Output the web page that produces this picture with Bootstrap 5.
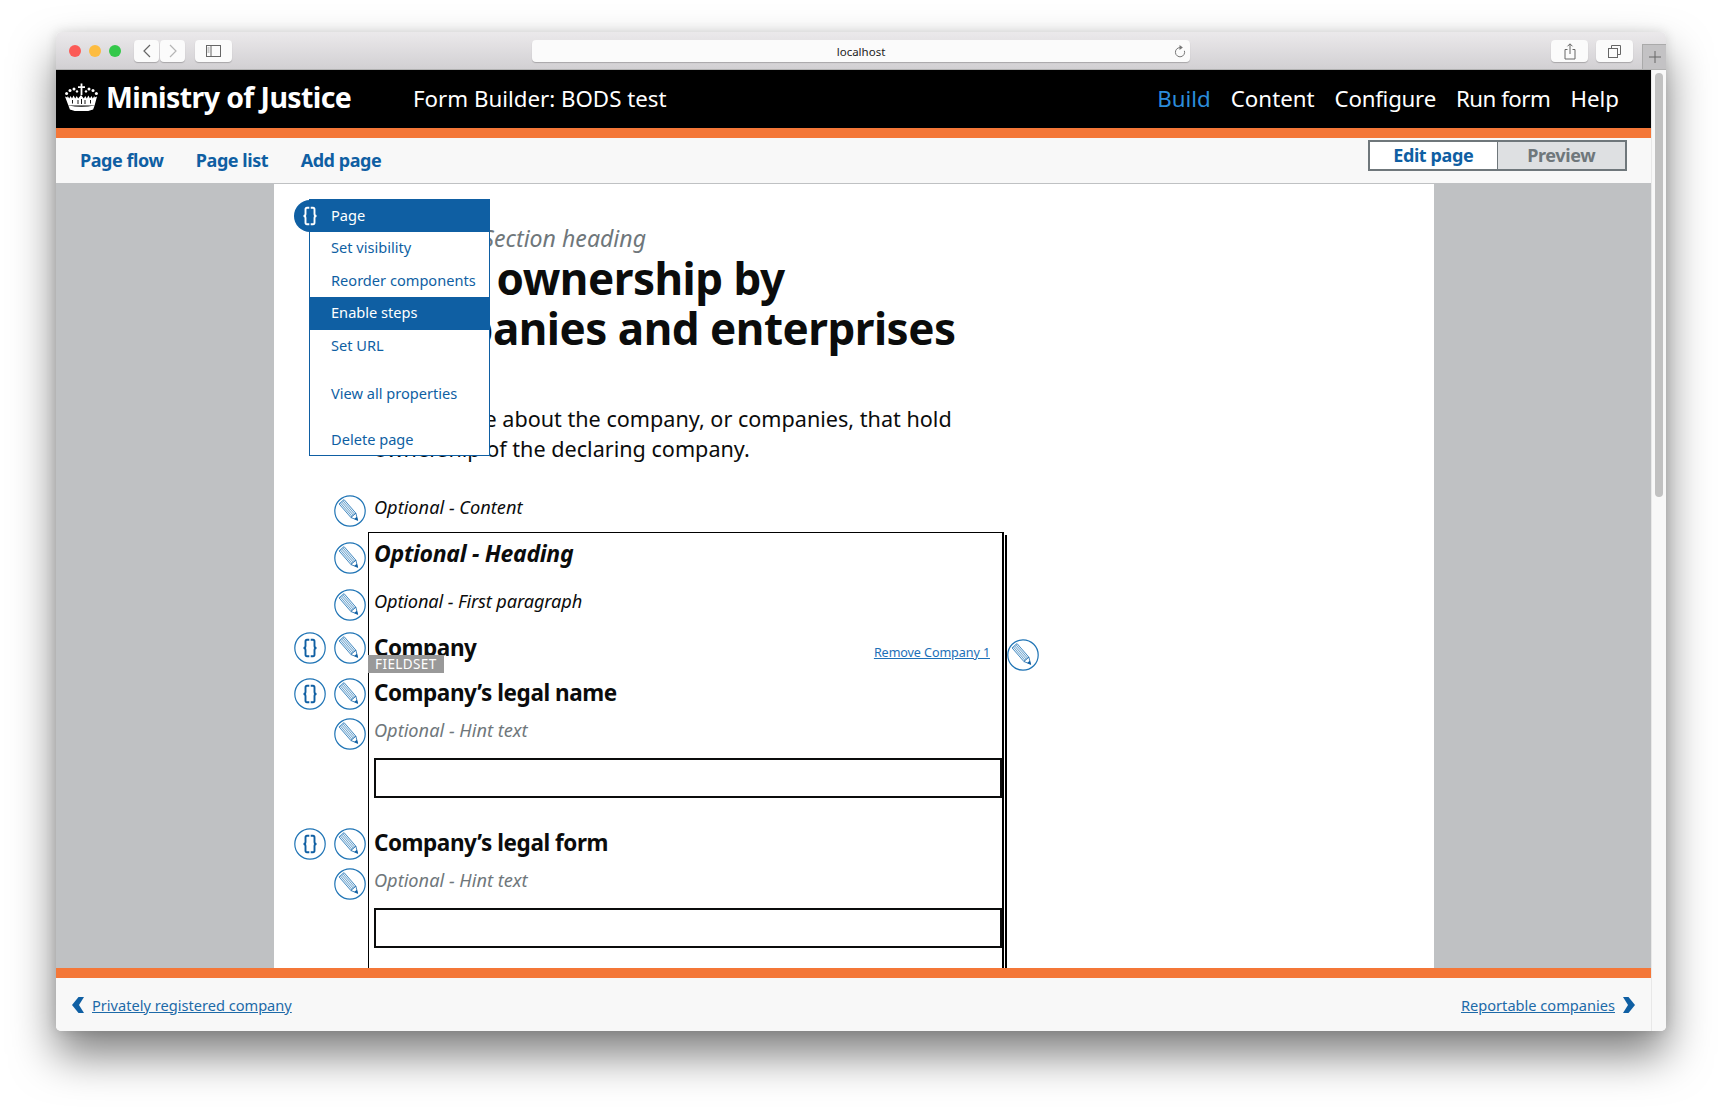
<!DOCTYPE html>
<html lang="en">

<head>
  <meta charset="UTF-8">
  <meta name="viewport" content="width=device-width, initial-scale=1.0">
  <title>Form Builder: BODS test</title>
  <link href="https://cdn.jsdelivr.net/npm/bootstrap@5.3.0/dist/css/bootstrap.min.css" rel="stylesheet">
  <style>
    html, body {
      height: 100%;
      background: #fff;
      overflow: hidden;
    }

    body {
      padding: 32px 56px 0;
      font-family: "Noto Sans", "Liberation Sans", sans-serif;
      color: #0b0c0c;
    }

    /* browser window */
    .mac-window {
      width: 1610px;
      height: 999px;
      border-radius: 5px;
      overflow: hidden;
      box-shadow: 0 24px 44px rgba(0, 0, 0, .5), 0 0 12px rgba(0, 0, 0, .12);
    }

    .mac-bar {
      height: 38px;
      padding-top: 8px;
      background: linear-gradient(#ebe9eb, #d2d0d3);
      border-bottom: 1px solid #b1b1b1;
    }

    .mac-dot {
      width: 12px;
      height: 12px;
      border-radius: 50%;
      margin-top: 5px;
      margin-left: 8px;
    }

    .dot-red { margin-left: 13px; background: #fc5b57; }
    .dot-amber { background: #fdbc40; }
    .dot-green { background: #34c84a; }

    .mac-btn {
      height: 22px;
      width: 37px;
      margin-left: 8px;
      background: #fbfbfb;
      border-radius: 4px;
      box-shadow: 0 1px 1px rgba(0, 0, 0, .22);
    }

    .mac-btn.btn-back { width: 25px; margin-left: 13px; }
    .mac-btn.btn-next { width: 25px; margin-left: 1px; }
    .mac-btn.btn-side { margin-left: 10px; }
    .mac-btn.btn-share { margin-left: 361px; }

    .mac-btn.mac-url {
      width: 658px;
      margin-left: 300px;
      font-size: 11.5px;
      padding-top: 1px;
      color: #222;
      position: relative;
    }

    .mac-plus {
      width: 24px;
      height: 25px;
      margin: 4px 0 0 9px;
      background: #c3c2c4;
      border-left: 1px solid #aaa;
      border-top: 1px solid #aaa;
    }

    /* app header */
    .app-head {
      height: 58px;
      background: #000;
      color: #fff;
    }

    .moj-crown {
      margin-top: -4px;
    }

    .moj-name {
      font-size: 28.5px;
      font-weight: 700;
      letter-spacing: -.6px;
      line-height: 1;
      margin: -4px 0 0 7px;
      width: 307px;
    }

    .form-name,
    .head-link {
      font-size: 22.3px;
      color: #fff;
      text-decoration: none;
    }

    .head-nav {
      gap: 20px;
      margin-right: 32px;
    }

    .head-link.on {
      color: #2b8cdb;
    }

    .head-link.tight-a { letter-spacing: -.25px; }
    .head-link.tight-b { letter-spacing: -.5px; }

    .orange-bar {
      height: 10px;
      background: #f47738;
    }

    .sub-nav {
      height: 46px;
      background: #f8f8f8;
      border-bottom: 1px solid #bfc1c3;
      padding: 0 24px;
      gap: 32.5px;
    }

    .sub-link {
      font-size: 18px;
      font-weight: 700;
      color: #0f5fa3;
      text-decoration: none;
      letter-spacing: -.45px;
    }

    .view-toggle {
      height: 31px;
      margin-top: -11px;
      border: 2px solid #6f777b;
    }

    .view-toggle a {
      width: 127.5px;
      font-size: 18px;
      font-weight: 700;
      letter-spacing: -.4px;
      text-decoration: none;
    }

    .view-edit {
      background: #fff;
      color: #0f5fa3;
      border-right: 1px solid #6f777b;
    }

    .view-preview {
      background: #dee0e2;
      color: #6f777b;
    }

    /* editor area */
    .editor-bg {
      height: 784px;
      background: #bfc1c3;
      overflow: hidden;
    }

    .editor-page {
      width: 1160px;
      height: 100%;
      margin-left: 218px;
      background: #fff;
      padding: 39px 0 0 100px;
    }

    .edit-row {
      position: relative;
    }

    .edit-handle {
      position: absolute;
      left: -40px;
      width: 32px;
      height: 32px;
      display: block;
    }

    .edit-handle.brace {
      left: -80px;
    }

    .edit-handle.far {
      left: auto;
      right: -37px;
      top: 6px;
    }

    .t-0 { top: 0; }
    .t-1 { top: 1px; }
    .t-2 { top: 2px; }
    .t-4 { top: 4px; }
    .t-n1 { top: -1px; }

    .sec-heading {
      font-size: 23.1px;
      line-height: 30px;
      font-style: italic;
      color: #6f777b;
    }

    .page-title {
      font-size: 44px;
      line-height: 50px;
      font-weight: 700;
      margin: 0 0 51px;
      letter-spacing: -.5px;
    }

    .title-tight {
      letter-spacing: -1.3px;
    }

    .lede-text {
      font-size: 21.6px;
      line-height: 30px;
      margin: 0 0 29px;
    }

    .opt-text {
      font-size: 18.2px;
      line-height: 28px;
      font-style: italic;
    }

    .opt-text.para-tight {
      letter-spacing: -.13px;
    }

    .group-box {
      width: 636px;
      height: 500px;
      margin-top: 11px;
      margin-left: -6px;
      padding: 5px 0 0 5px;
      border: 1px solid #000;
      border-right-width: 2px;
      border-bottom: 0;
      position: relative;
    }

    .group-box::after {
      content: "";
      position: absolute;
      top: 2px;
      right: -5px;
      bottom: 0;
      width: 2px;
      background: #000;
    }

    .opt-heading {
      font-size: 23px;
      line-height: 30px;
      font-weight: 700;
      font-style: italic;
      letter-spacing: -.3px;
    }

    .field-title {
      font-size: 22.5px;
      line-height: 30px;
      font-weight: 700;
      letter-spacing: -.45px;
      height: 30px;
    }

    .hint-text {
      font-size: 18.2px;
      line-height: 26px;
      font-style: italic;
      color: #6f777b;
    }

    .field-input {
      display: block;
      width: 628px;
      height: 40px;
      border: 2px solid #0b0c0c;
      border-radius: 0;
      background: #fff;
    }

    .fieldset-tag {
      position: absolute;
      left: -6px;
      top: 22px;
      width: 76px;
      height: 18px;
      background: #999;
      color: #fff;
      font-size: 13.5px;
      font-weight: 400;
      line-height: 18px;
      padding-left: 7px;
      letter-spacing: .4px;
    }

    .remove-link {
      font-size: 12.6px;
      font-weight: 400;
      color: #1d70b8;
      margin: 5px 12px 0 0;
      line-height: 30px;
      letter-spacing: -.1px;
    }

    .mt-9 { margin-top: 9px; }
    .mt-15 { margin-top: 15px; }
    .mt-18 { margin-top: 18px; }
    .mt-19 { margin-top: 19px; }
    .mt-30 { margin-top: 30px; }

    /* component menu, lies over the page */
    .comp-menu {
      position: absolute;
      left: 253px;
      top: 15px;
      width: 181px;
      height: 257px;
      background: #fff;
      border: 1px solid #0f5fa3;
      padding: 0;
      margin: 0;
      list-style: none;
      font-size: 14.6px;
    }

    .comp-menu a {
      display: block;
      height: 33px;
      line-height: 31px;
      padding-left: 21px;
      color: #0f5fa3;
      text-decoration: none;
      white-space: nowrap;
    }

    .comp-menu a.on {
      background: #0f5fa3;
      color: #fff;
    }

    .comp-menu a.row-32 { height: 32px; }
    .comp-menu a.row-low { line-height: 33px; }
    .comp-menu a.gap-a { margin-top: 15px; }
    .comp-menu a.gap-b { margin-top: 13px; }

    .page-pill {
      position: absolute;
      left: 238px;
      top: 16px;
      width: 32px;
      height: 32px;
      border-radius: 16px 0 0 16px;
      background: #0f5fa3;
      color: #fff;
    }

    .pill-braces {
      display: block;
      width: 32px;
      height: 32px;
    }

    /* footer */
    .app-foot {
      height: 53px;
      background: #f8f8f8;
      padding: 2px 16px 0;
      font-size: 14.6px;
    }

    .app-foot a {
      color: #1d6aa8;
    }

    /* fake scrollbar */
    .scroll-track {
      width: 15px;
      background: #f8f8f8;
      border-left: 1px solid #e8e8e8;
      padding: 3px 3px 0;
    }

    .scroll-thumb {
      height: 424px;
      background: #c1c1c1;
      border-radius: 4px;
    }
  </style>
</head>

<body>
  <svg width="0" height="0" class="position-absolute">
    <symbol id="pencil" viewBox="0 0 32 32">
      <circle cx="16" cy="16" r="15.2" fill="#fff" stroke="#1f74b5" stroke-width="1.2"/>
      <g transform="rotate(49 16 16)">
        <rect x="3.5" y="13" width="18" height="6.6" fill="#eaf2f8" stroke="#2a7ab8" stroke-width=".8"/>
        <path d="M3.5 14.6h18M3.5 16.3h18M3.5 18h18" stroke="#2a7ab8" stroke-width=".6"/>
        <path d="M21.5 13L28 16.3L21.5 19.6z" fill="#fff" stroke="#1f6cab" stroke-width=".8"/>
        <path d="M24.7 14.6L28.6 16.3L24.7 18z" fill="#0f5fa3"/>
      </g>
    </symbol>
    <symbol id="brace-marks" viewBox="0 0 32 32">
      <path d="M15.3 7.8h-2.3q-1.5 0-1.500 1.800v4.400q0 2-2 2q2 0 2 2v4.400q0 1.800 1.500 1.800h2.300M16.700 7.800h2.300q1.500 0 1.500 1.800v4.400q0 2 2 2q-2 0-2 2v4.400q0 1.800-1.500 1.800h-2.300" fill="none" stroke="currentColor" stroke-width="1.9"/>
    </symbol>
    <symbol id="braces" viewBox="0 0 32 32">
      <circle cx="16" cy="16" r="15.2" fill="#fff" stroke="#1f74b5" stroke-width="1.2"/>
      <use href="#brace-marks" width="32" height="32" color="#0f5fa3"/>
    </symbol>
  </svg>

  <div class="mac-window">
    <div class="mac-bar d-flex">
      <span class="mac-dot dot-red"></span>
      <span class="mac-dot dot-amber"></span>
      <span class="mac-dot dot-green"></span>
      <span class="mac-btn btn-back d-flex align-items-center justify-content-center">
        <svg width="8" height="14" viewBox="0 0 8 14"><path d="M7 1L1 7l6 6" fill="none" stroke="#666" stroke-width="1.2"/></svg>
      </span>
      <span class="mac-btn btn-next d-flex align-items-center justify-content-center">
        <svg width="8" height="14" viewBox="0 0 8 14"><path d="M1 1l6 6-6 6" fill="none" stroke="#b5b5b5" stroke-width="1.2"/></svg>
      </span>
      <span class="mac-btn btn-side d-flex align-items-center justify-content-center">
        <svg width="15" height="12" viewBox="0 0 15 12"><rect x=".5" y=".5" width="14" height="11" fill="none" stroke="#666"/><path d="M5 .5v11" stroke="#666"/><path d="M1.5 3h2M1.5 5h2M1.5 7h2" stroke="#999"/></svg>
      </span>
      <span class="mac-btn mac-url d-flex align-items-center justify-content-center">
        localhost
        <svg class="position-absolute end-0 me-1" width="13" height="14" viewBox="0 0 13 14"><path d="M7 2.6a4.6 4.6 0 1 0 4.4 3.2" fill="none" stroke="#777" stroke-width="1"/><path d="M6.5 0l3.4 2.6L6.5 5z" fill="#777"/></svg>
      </span>
      <span class="mac-btn btn-share d-flex align-items-center justify-content-center">
        <svg width="12" height="17" viewBox="0 0 12 17"><path d="M3.5 6.5H1v9.500h10V6.500H8.500M6 11V1M3.500 3.300L6 .8l2.500 2.500" fill="none" stroke="#666"/></svg>
      </span>
      <span class="mac-btn d-flex align-items-center justify-content-center">
        <svg width="13" height="13" viewBox="0 0 13 13"><rect x=".5" y="3.5" width="9" height="9" fill="none" stroke="#666"/><path d="M3.5 3.5V.5h9v9h-3" fill="none" stroke="#666"/></svg>
      </span>
      <span class="mac-plus d-flex align-items-center justify-content-center">
        <svg width="12" height="12" viewBox="0 0 12 12"><path d="M6 0v12M0 6h12" stroke="#666"/></svg>
      </span>
    </div>

    <div class="d-flex">
      <div class="flex-grow-1">
        <header class="app-head d-flex align-items-center ps-2">
          <svg class="moj-crown" width="35" height="28" viewBox="0 0 35 28" fill="#fff">
            <!-- cross and arc of pearls -->
            <path d="M16.6 .5h1.8v2.700h2.600v1.800h-2.600v7h-1.800V5H14V3.200h2.600z"/>
            <circle cx="2.6" cy="10.5" r="1.5"/><circle cx="6" cy="7.6" r="1.5"/><circle cx="10" cy="6" r="1.5"/><circle cx="13" cy="8.4" r="1.2"/>
            <circle cx="32.4" cy="10.5" r="1.5"/><circle cx="29" cy="7.6" r="1.5"/><circle cx="25" cy="6" r="1.5"/><circle cx="22" cy="8.4" r="1.2"/>
            <!-- arches and small crosses -->
            <path d="M1 13.5l2.300 1 .4-1.500 1.500 2.500 1.400-2.600 1.400 2.600 1.600-3 1.600 3 1.500-2.600 1.500 2.600 2.800-3.500 2.800 3.500 1.500-2.600 1.500 2.600 1.600-3 1.600 3 1.400-2.600 1.400 2.600 1.500-2.500.4 1.500 2.300-1L30.600 22.500H4.400z"/>
            <path d="M4.400 22.500l1.500 4a32 32 0 0 0 23.200 0l1.500-4q-13.100 2.600-26.200 0z"/>
            <path d="M8.500 17v3.500M14 17v4M21 17v4M26.500 17v3.500M17.500 16v5" stroke="#000" stroke-width=".9"/>
          </svg>
          <span class="moj-name">Ministry of Justice</span>
          <span class="form-name">Form Builder: BODS test</span>
          <nav class="head-nav ms-auto d-flex">
            <a class="head-link on" href="#">Build</a>
            <a class="head-link" href="#">Content</a>
            <a class="head-link tight-a" href="#">Configure</a>
            <a class="head-link tight-b" href="#">Run form</a>
            <a class="head-link" href="#">Help</a>
          </nav>
        </header>
        <div class="orange-bar"></div>
        <div class="sub-nav d-flex align-items-center">
          <a class="sub-link" href="#">Page flow</a>
          <a class="sub-link" href="#">Page list</a>
          <a class="sub-link" href="#">Add page</a>
          <div class="view-toggle d-flex ms-auto">
            <a class="view-edit d-flex align-items-center justify-content-center" href="#">Edit page</a>
            <a class="view-preview d-flex align-items-center justify-content-center" href="#">Preview</a>
          </div>
        </div>

        <main class="editor-bg position-relative">
          <div class="editor-page">
            <div class="sec-heading">Optional - Section heading</div>
            <h1 class="page-title"><span class="title-tight">Legal</span> ownership by<br>companies and enterprises</h1>
            <p class="lede-text">Tell us more about the company, or companies, that hold<br>ownership of the declaring company.</p>

            <div class="edit-row opt-text">
              <svg class="edit-handle t-2"><use href="#pencil"/></svg>
              Optional - Content
            </div>

            <div class="group-box">
              <div class="edit-row opt-heading">
                <svg class="edit-handle t-4"><use href="#pencil"/></svg>
                Optional - Heading
              </div>
              <div class="edit-row opt-text para-tight mt-19">
                <svg class="edit-handle t-2"><use href="#pencil"/></svg>
                Optional - First paragraph
              </div>
              <div class="edit-row field-title mt-18 d-flex justify-content-between">
                <svg class="edit-handle brace t-n1"><use href="#braces"/></svg>
                <svg class="edit-handle t-n1"><use href="#pencil"/></svg>
                <span>Company</span>
                <a class="remove-link" href="#">Remove Company 1</a>
                <svg class="edit-handle far"><use href="#pencil"/></svg>
                <span class="fieldset-tag">FIELDSET</span>
              </div>
              <div class="edit-row field-title mt-15">
                <svg class="edit-handle brace t-0"><use href="#braces"/></svg>
                <svg class="edit-handle t-0"><use href="#pencil"/></svg>
                Company’s legal name
              </div>
              <div class="edit-row hint-text mt-9">
                <svg class="edit-handle t-1"><use href="#pencil"/></svg>
                Optional - Hint text
              </div>
              <div class="field-input mt-15"></div>
              <div class="edit-row field-title mt-30">
                <svg class="edit-handle brace t-0"><use href="#braces"/></svg>
                <svg class="edit-handle t-0"><use href="#pencil"/></svg>
                Company’s legal form
              </div>
              <div class="edit-row hint-text mt-9">
                <svg class="edit-handle t-1"><use href="#pencil"/></svg>
                Optional - Hint text
              </div>
              <div class="field-input mt-15"></div>
            </div>
          </div>

          <ul class="comp-menu">
            <li><a class="on row-32" href="#">Page</a></li>
            <li><a class="row-32" href="#">Set visibility</a></li>
            <li><a class="row-low" href="#">Reorder components</a></li>
            <li><a class="on" href="#">Enable steps</a></li>
            <li><a href="#">Set URL</a></li>
            <li><a class="gap-a" href="#">View all properties</a></li>
            <li><a class="gap-b" href="#">Delete page</a></li>
          </ul>
          <div class="page-pill">
            <svg class="pill-braces"><use href="#brace-marks"/></svg>
          </div>
        </main>

        <div class="orange-bar"></div>
        <footer class="app-foot d-flex align-items-center justify-content-between">
          <span class="d-flex align-items-center">
            <svg class="me-2" width="12" height="16" viewBox="0 0 12 16"><path d="M6.5 0H12L7 8l5 8H6.5L0 8z" fill="#0f5fa3"/></svg>
            <a href="#">Privately registered company</a>
          </span>
          <span class="d-flex align-items-center">
            <a href="#">Reportable companies</a>
            <svg class="ms-2" width="12" height="16" viewBox="0 0 12 16"><path d="M5.5 0H0l5 8-5 8h5.500L12 8z" fill="#0f5fa3"/></svg>
          </span>
        </footer>
      </div>
      <div class="scroll-track flex-shrink-0">
        <div class="scroll-thumb"></div>
      </div>
    </div>
  </div>
</body>

</html>
